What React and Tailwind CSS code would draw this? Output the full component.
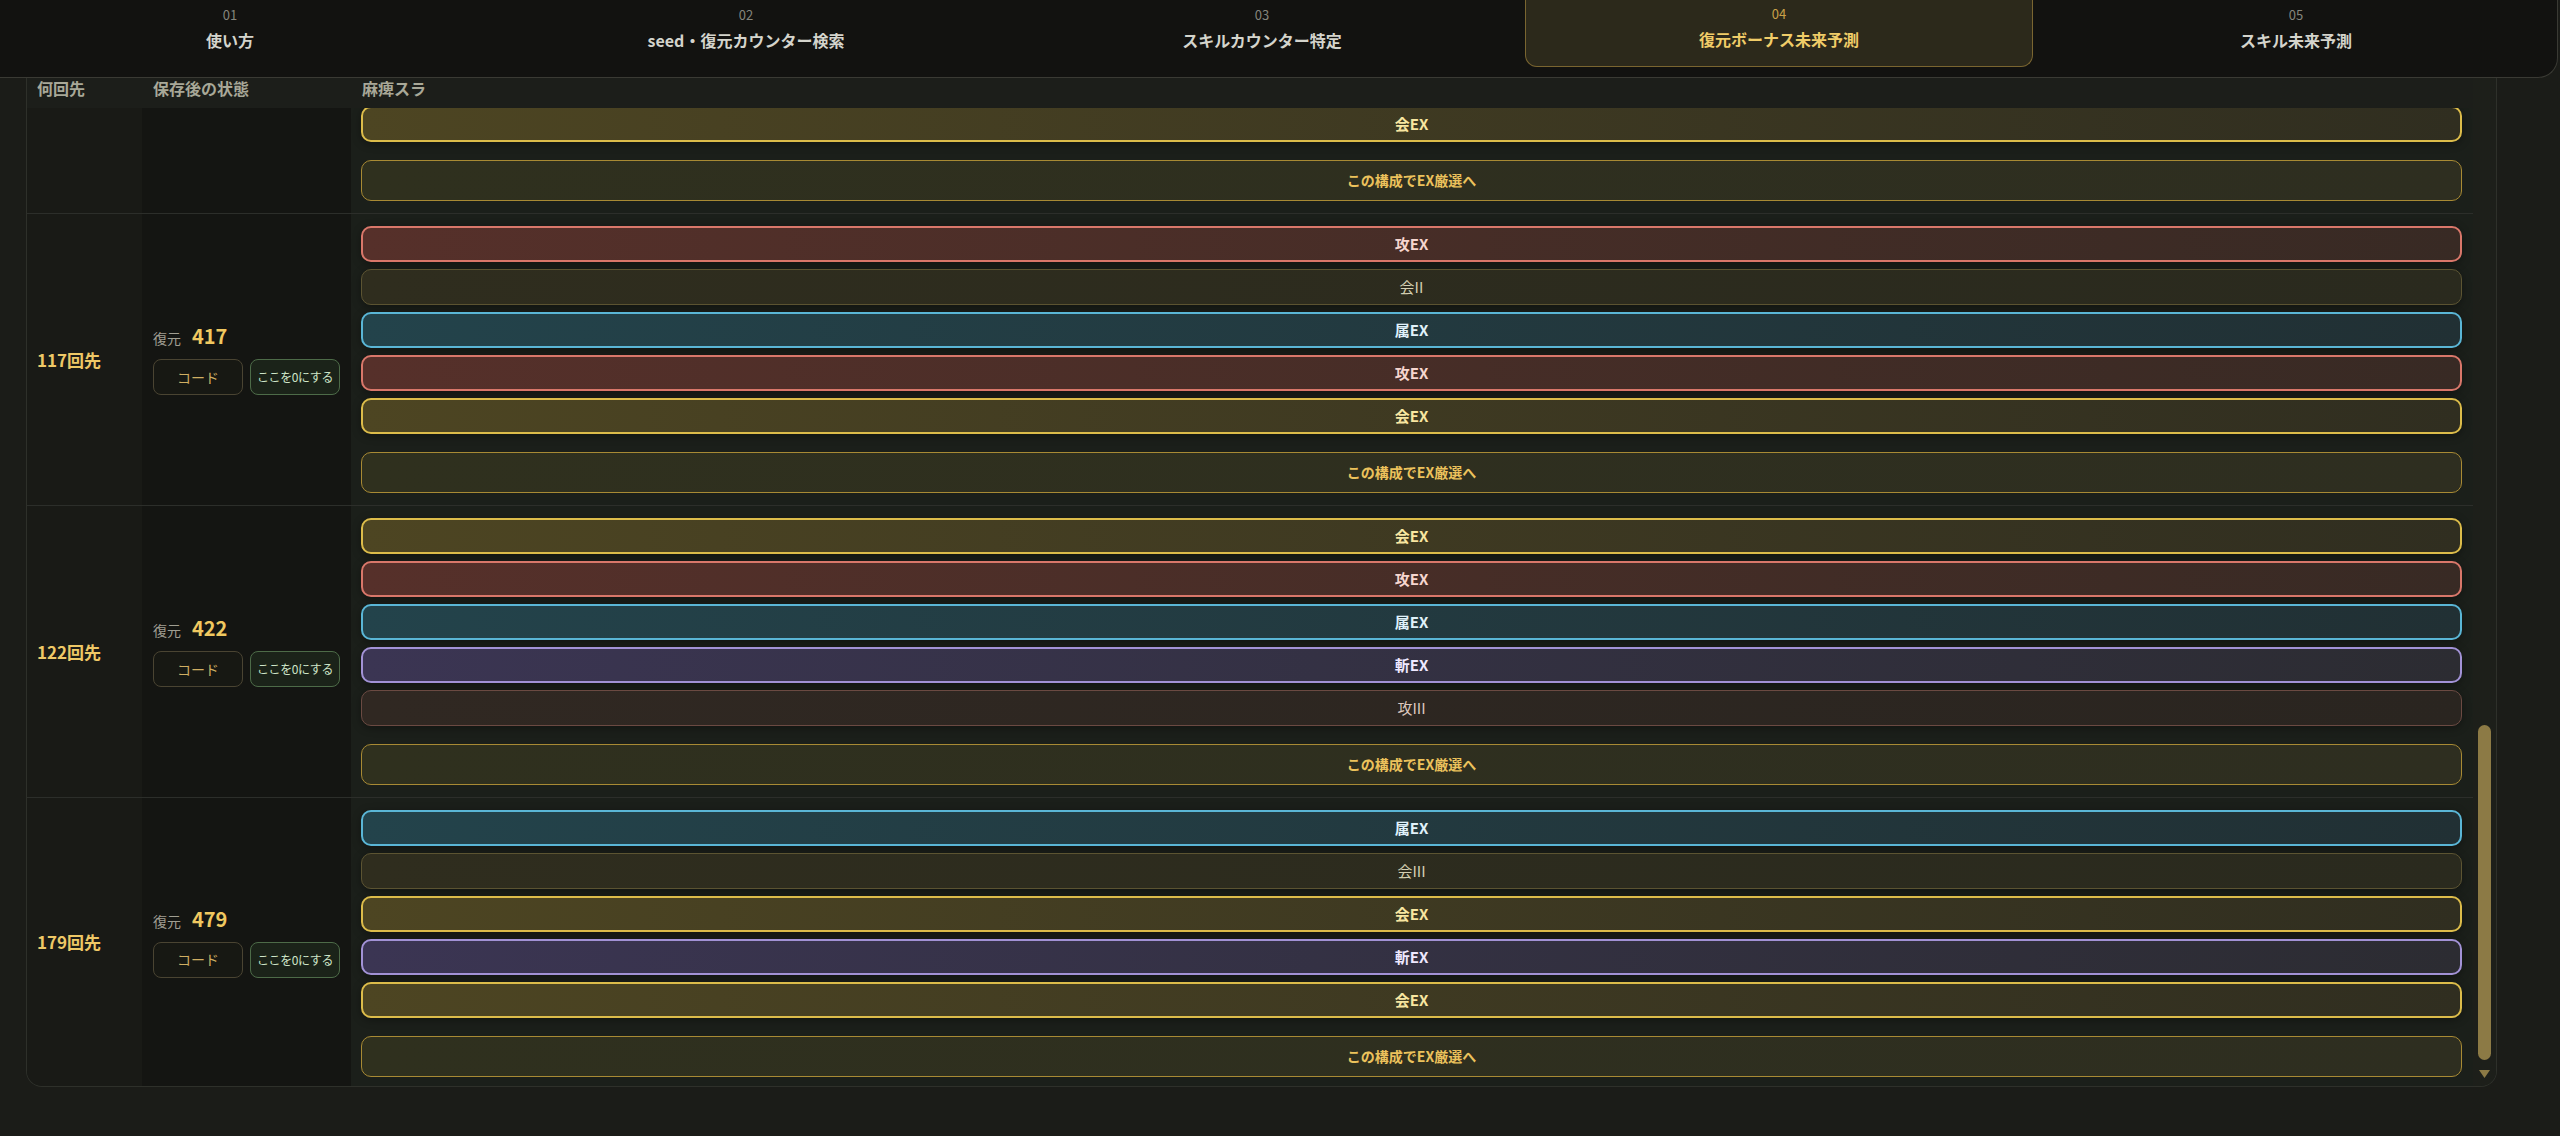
import React from 'react';

const tabs = [
  { no: '01', label: '使い方' },
  { no: '02', label: 'seed・復元カウンター検索' },
  { no: '03', label: 'スキルカウンター特定' },
  { no: '04', label: '復元ボーナス未来予測', active: true },
  { no: '05', label: 'スキル未来予測' },
];

// chip look per skill kind
const chipStyles = {
  atkEX: 'border-2 border-[#d9776a] bg-linear-to-r from-[#56302a] to-[#382a24] text-[#f6d6cf] font-bold',
  atk: 'border border-[#6b4a42] bg-linear-to-r from-[#302822] to-[#2a2520] text-[#dcc8be]',
  critEX: 'border-2 border-[#dcbc4a] bg-linear-to-r from-[#4d4522] to-[#302e20] text-[#f8e6a0] font-bold',
  crit: 'border border-[#5c5432] bg-linear-to-r from-[#2f2d1e] to-[#2a2a1e] text-[#d4cfb2]',
  elemEX: 'border-2 border-[#5ab6d6] bg-linear-to-r from-[#23434b] to-[#213034] text-[#e0f2fa] font-bold',
  slashEX: 'border-2 border-[#a292d6] bg-linear-to-r from-[#3b3553] to-[#2c2c32] text-[#eee8ff] font-bold',
};

const rows = [
  { ahead: null, value: null, skills: [['攻EX', 'atkEX'], ['会III', 'crit'], ['属EX', 'elemEX'], ['斬EX', 'slashEX'], ['会EX', 'critEX']] },
  { ahead: 117, value: 417, skills: [['攻EX', 'atkEX'], ['会II', 'crit'], ['属EX', 'elemEX'], ['攻EX', 'atkEX'], ['会EX', 'critEX']] },
  { ahead: 122, value: 422, skills: [['会EX', 'critEX'], ['攻EX', 'atkEX'], ['属EX', 'elemEX'], ['斬EX', 'slashEX'], ['攻III', 'atk']] },
  { ahead: 179, value: 479, skills: [['属EX', 'elemEX'], ['会III', 'crit'], ['会EX', 'critEX'], ['斬EX', 'slashEX'], ['会EX', 'critEX']] },
];

const Chip = ({ text, kind }) => (
  <div className={`h-[36px] rounded-[10px] flex items-center justify-center text-[15px] shadow-[0_2px_8px_rgba(0,0,0,0.35)] ${chipStyles[kind]}`}>
    {text}
  </div>
);

const Row = ({ row, last }) => (
  <div className="flex border-t border-[#2c2e2a] shrink-0">
    <div className="w-[115px] shrink-0 bg-[#191a16] flex items-center pl-[10px]">
      {row.ahead && <span className="text-[17px] font-bold text-[#eec866]">{row.ahead}回先</span>}
    </div>
    <div className="w-[209px] shrink-0 bg-[#141512] flex flex-col justify-center pl-[11px]">
      {row.value && (
        <>
          <div className="flex items-baseline gap-[11px] leading-[24px]">
            <span className="text-[14px] text-[#a09e92]">復元</span>
            <span className="text-[20px] font-bold text-[#f0c860]">{row.value}</span>
          </div>
          <div className="flex gap-[7px] mt-[9px]">
            <button className="w-[90px] h-[36px] rounded-[8px] border border-[#4a4432] bg-[#171813] text-[14px] text-[#cfae62]">コード</button>
            <button className="w-[90px] h-[36px] rounded-[8px] border border-[#4d6b48] bg-[#1b2319] text-[12px] tracking-[-0.4px] text-[#cfe5c8]">ここを0にする</button>
          </div>
        </>
      )}
    </div>
    <div className={`flex-1 bg-[#1b1f1a] pl-[10px] pr-[11px] pt-[12px] flex flex-col ${last ? 'pb-[9px]' : 'pb-[12px]'}`}>
      <div className="flex flex-col gap-[7px]">
        {row.skills.map(([t, k], i) => <Chip key={i} text={t} kind={k} />)}
      </div>
      <button className="mt-[18px] h-[41px] rounded-[10px] border border-[#a88a34] bg-linear-to-r from-[#2f301e] to-[#2e2e20] text-[14px] font-bold text-[#ecc25c]">
        この構成でEX厳選へ
      </button>
    </div>
  </div>
);

export default function App() {
  return (
    <div className="h-[1136px] overflow-hidden bg-[#1b1c18] font-['Noto_Sans_CJK_JP','Noto_Sans',sans-serif]">
      <nav className="ml-[-31px] mr-[2px] h-[78px] bg-[#121210] border-b border-r border-[#3a3a34] rounded-br-[20px] px-[8px] flex gap-[10px]">
        {tabs.map(t => (
          <div
            key={t.no}
            className={`flex-1 h-[67px] flex flex-col items-center justify-center pb-[10px] ${t.active ? 'bg-[#2c291b] border border-t-0 border-[#7a6530] rounded-b-[12px]' : ''}`}
          >
            <span className={`text-[13px] leading-[16px] ${t.active ? 'text-[#c8a048]' : 'text-[#85857c]'}`}>{t.no}</span>
            <span className={`mt-[6px] text-[16px] leading-[22px] font-semibold ${t.active ? 'text-[#f0cc68]' : 'text-[#d4d4cc]'}`}>{t.label}</span>
          </div>
        ))}
      </nav>

      <div className="ml-[26px] w-[2471px] h-[1009px] border-x border-b border-[#2e302a] rounded-b-[16px] overflow-hidden flex bg-[#1c1e1a]">
        <div className="flex-1 flex flex-col min-w-0">
          <div className="h-[30px] shrink-0 flex items-start bg-[#1c1e1a] text-[16px] leading-[20px] font-semibold text-[#a8a898]">
            <div className="w-[115px] pl-[10px]">何回先</div>
            <div className="w-[209px] pl-[11px]">保存後の状態</div>
            <div className="flex-1 pl-[11px]">麻痺スラ</div>
          </div>
          <div className="flex-1 min-h-0 overflow-hidden flex flex-col justify-end">
            {rows.map((r, i) => <Row key={i} row={r} last={i === rows.length - 1} />)}
          </div>
        </div>
        <div className="w-[23px] shrink-0 bg-[#1d1f1a] flex flex-col items-center justify-end pb-[8px]">
          <div className="w-[13px] h-[335px] rounded-full bg-[#8c7a45]" />
          <svg width="11" height="8" viewBox="0 0 11 8" className="mt-[10px]">
            <path d="M0 0 L11 0 L5.5 8 Z" fill="#8c7a45" />
          </svg>
        </div>
      </div>
    </div>
  );
}
